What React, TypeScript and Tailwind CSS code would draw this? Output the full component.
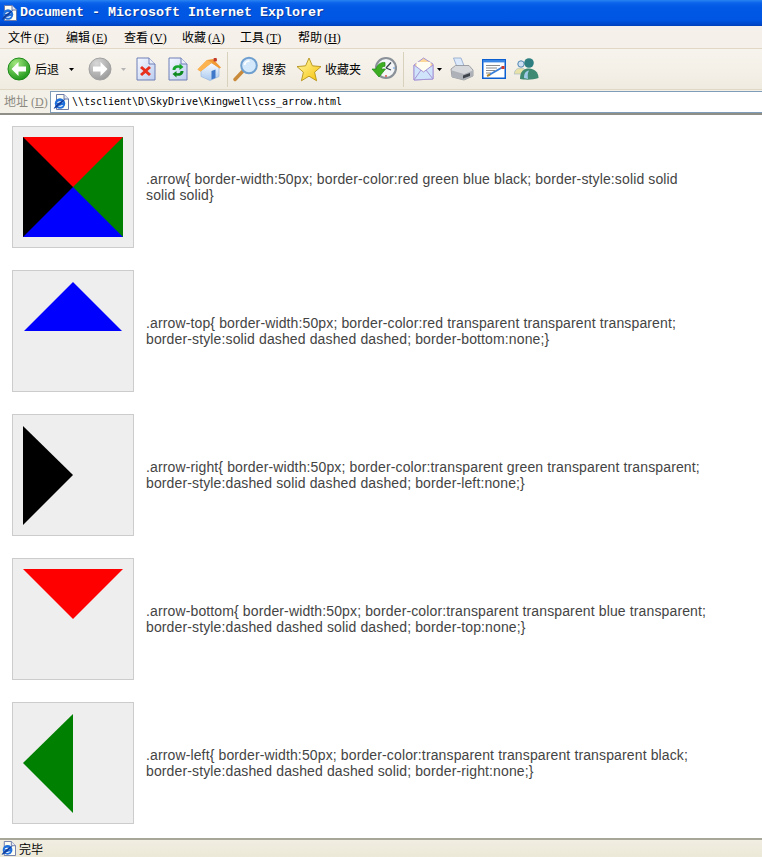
import React from "react";

const cjk = "font-['Noto_Sans_CJK_SC',sans-serif]";

const menus = [
  ["文件", "F"],
  ["编辑", "E"],
  ["查看", "V"],
  ["收藏", "A"],
  ["工具", "T"],
  ["帮助", "H"],
];

// small IE page icon, used in title bar, address bar and status bar
const IePage = ({ size = 16 }: { size?: number }) => (
  <svg width={size} height={size} viewBox="0 0 16 16">
    <path d="M3.5 .5H11L15.5 5V15.5H3.5Z" fill="#fdfdf4" stroke="#6b7aa8" />
    <path d="M11 .5V5H15.5" fill="#e4e8f2" stroke="#6b7aa8" />
    <circle cx="7" cy="9.5" r="5.2" fill="#1f6fdc" />
    <path d="M3.8 8.8H9.8C9.4 6.8 4.8 6.6 3.8 8.8ZM3.6 10.2C4 13 8 13.6 10.4 11.2H8.2C6.6 12.2 5.2 11.6 5.2 10.2Z" fill="#fff" />
    <path d="M.6 14.6C2.6 15 8.4 10 12.4 5C9.4 5.8 2.4 10.8 .6 14.6Z" fill="#123f9e" />
  </svg>
);

const RoundArrow = ({ id, dir, light, dark, ring }: { id: string; dir: "left" | "right"; light: string; dark: string; ring: string }) => (
  <svg width="24" height="24" viewBox="0 0 24 24">
    <defs>
      <radialGradient id={id} cx="35%" cy="25%" r="85%">
        <stop offset="0" stopColor={light} />
        <stop offset="1" stopColor={dark} />
      </radialGradient>
    </defs>
    <circle cx="12" cy="12" r="11" fill={`url(#${id})`} stroke={ring} />
    <path
      d={dir === "left" ? "M4.5 12L11.5 5V9.5H19V14.5H11.5V19Z" : "M19.5 12L12.5 5V9.5H5V14.5H12.5V19Z"}
      fill="#fff"
    />
  </svg>
);

const DocIcon = ({ children }: { children: React.ReactNode }) => (
  <svg width="20" height="24" viewBox="0 0 20 24">
    <defs>
      <linearGradient id="docFill" x1="0" y1="0" x2="1" y2="1">
        <stop offset="0" stopColor="#f6f9ff" />
        <stop offset="1" stopColor="#bccdf0" />
      </linearGradient>
    </defs>
    <path d="M1 1H13L19 7V23H1Z" fill="url(#docFill)" stroke="#6f7fb5" />
    <path d="M13 1V7H19" fill="#e7ecf8" stroke="#6f7fb5" />
    {children}
  </svg>
);

const HomeIcon = () => (
  <svg width="25" height="24" viewBox="0 0 25 24">
    <defs>
      <linearGradient id="wall" x1="0" y1="0" x2="0" y2="1">
        <stop offset="0" stopColor="#ffffff" />
        <stop offset="1" stopColor="#a9c9f0" />
      </linearGradient>
    </defs>
    <path d="M4 11V19.5L13 23.5L22 19.5V10L13 5Z" fill="url(#wall)" stroke="#8fb0dc" strokeWidth=".6" />
    <path d="M14.5 14L18.5 12.6V21L14.5 22.6Z" fill="#3f78c8" />
    <path d="M.5 12.5L10 3L16 2L24 10.5L22.5 11.5L14.5 6L3.5 14.5Z" fill="#f29a34" />
    <path d="M.5 12.5L10 3L15 5.5L3.5 14.5Z" fill="#fbb451" />
    <rect x="16.5" y="1" width="3.4" height="3.4" rx="1" fill="#c23a28" />
  </svg>
);

const SearchIcon = () => (
  <svg width="26" height="26" viewBox="0 0 26 26">
    <path d="M2 23.5L9.5 15.5" stroke="#c98a3a" strokeWidth="3.4" strokeLinecap="round" />
    <circle cx="16" cy="9.5" r="7.8" fill="#d4e8fb" stroke="#6f9fce" strokeWidth="2" />
    <path d="M11.5 9C12 6.5 14 5 16.5 5" stroke="#fff" strokeWidth="1.6" fill="none" />
  </svg>
);

const StarIcon = () => (
  <svg width="26" height="25" viewBox="0 0 26 25">
    <defs>
      <linearGradient id="star" x1="0" y1="0" x2="1" y2="1">
        <stop offset="0" stopColor="#fffbb0" />
        <stop offset="1" stopColor="#f7c000" />
      </linearGradient>
    </defs>
    <path d="M13 1L16.4 8.8L25 9.6L18.6 15.2L20.6 23.8L13 19.2L5.4 23.8L7.4 15.2L1 9.6L9.6 8.8Z" fill="url(#star)" stroke="#b4931a" strokeWidth=".9" />
  </svg>
);

const HistoryIcon = () => (
  <svg width="26" height="26" viewBox="0 0 26 26">
    <circle cx="15" cy="12" r="10" fill="#f3f5f7" stroke="#8a9198" strokeWidth="2.2" />
    <path d="M15 12L20 6.5M15 12L20 14" stroke="#39424c" strokeWidth="1.3" />
    <circle cx="15" cy="20" r="1" fill="#dd5148" />
    <circle cx="23" cy="12" r=".8" fill="#4a90d9" />
    <path d="M14 6.5C10 6 6 8.5 5.2 13H1L8 21L14.5 13H10.2C10.8 11 12.4 10.2 14 10.3Z" fill="#3dae22" stroke="#1f8a14" strokeWidth=".7" />
  </svg>
);

const MailIcon = () => (
  <svg width="21" height="24" viewBox="0 0 21 24">
    <path d="M1 8L10.5 1L20 7V22L1 23Z" fill="#fbd79a" stroke="#a795d6" />
    <path d="M3.5 11V5L17.5 5V11L10.5 15Z" fill="#fffdf2" />
    <path d="M1 8L10.5 15L20 8V22L1 23Z" fill="#cfe3fb" stroke="#a795d6" />
    <path d="M1 23L8 13M20 22L13 13" stroke="#a795d6" />
  </svg>
);

const PrinterIcon = () => (
  <svg width="24" height="24" viewBox="0 0 24 24">
    <path d="M3.5 1H11L14.5 10H7Z" fill="#dce9fb" stroke="#8ea3c9" strokeWidth=".8" />
    <path d="M1 12L5.5 8.5H19L23 13V19L14 23L2 20Z" fill="#d6d8dc" stroke="#8b8f96" strokeWidth=".8" />
    <path d="M2 13.5L14 17L23 13.5V19L14 23L2 20Z" fill="#aeb2b8" />
    <path d="M13 18.5L20 16V19L13 21.5Z" fill="#3f444c" />
  </svg>
);

const EditIcon = () => (
  <svg width="24" height="20" viewBox="0 0 24 20">
    <rect x=".75" y=".75" width="22.5" height="18.5" fill="#fff" stroke="#0b5fd0" strokeWidth="1.5" />
    <rect x="1" y="1" width="22" height="2.4" fill="#3a86e4" />
    <path d="M4 6.5H18M4 9H15M4 11.5H13M4 14H9" stroke="#8b8b8b" />
    <path d="M7 16L20 8.5" stroke="#3a7fd8" strokeWidth="2" />
    <path d="M5 17L8 15.5" stroke="#b58a2f" strokeWidth="2" />
    <rect x="19.5" y="7" width="3" height="3" fill="#d23a2a" />
  </svg>
);

const MessengerIcon = () => (
  <svg width="25" height="22" viewBox="0 0 25 22">
    <circle cx="7" cy="6" r="3.2" fill="#cfe0f3" stroke="#4f86b0" />
    <path d="M0 16C1 11 4 10 7 10C10 10 12 12 12 16Z" fill="#e9e2a8" stroke="#9bb3c6" strokeWidth=".6" />
    <circle cx="15" cy="5" r="4.8" fill="#2f7f80" />
    <path d="M6 21C6 13 10 10.5 15 10.5C20 10.5 24.5 14 24.5 20C19 22 11 22 6 21Z" fill="#3f8a72" />
    <path d="M10 20C10 15 12 13 15 12.5C13.5 15 13.5 18 14 21Z" fill="#9fcbe8" />
  </svg>
);

const Caret = ({ color = "#000" }: { color?: string }) => (
  <svg width="5" height="3" viewBox="0 0 5 3">
    <path d="M0 0H5L2.5 3Z" fill={color} />
  </svg>
);

const Divider = () => <div className="h-[35px] w-px bg-[#d8d2bd]" />;

const rows = [
  {
    text: ".arrow{ border-width:50px; border-color:red green blue black; border-style:solid solid solid solid}",
    shape: (
      <div className="h-[100px] w-[100px] border-[50px] border-t-[#ff0000] border-r-[#008000] border-b-[#0000ff] border-l-[#000000]" />
    ),
  },
  {
    text: ".arrow-top{ border-width:50px; border-color:red transparent transparent transparent; border-style:solid dashed dashed dashed; border-bottom:none;}",
    shape: (
      <div className="mt-px ml-px h-0 w-0 border-x-[49px] border-b-[49px] border-x-transparent border-b-[#0000ff]" />
    ),
  },
  {
    text: ".arrow-right{ border-width:50px; border-color:transparent green transparent transparent; border-style:dashed solid dashed dashed; border-left:none;}",
    shape: (
      <div className="mt-px h-0 w-0 border-t-[49px] border-b-[50px] border-l-[50px] border-y-transparent border-l-[#000000]" />
    ),
  },
  {
    text: ".arrow-bottom{ border-width:50px; border-color:transparent transparent blue transparent; border-style:dashed dashed solid dashed; border-top:none;}",
    shape: (
      <div className="h-0 w-0 border-x-[50px] border-t-[50px] border-x-transparent border-t-[#ff0000]" />
    ),
  },
  {
    text: ".arrow-left{ border-width:50px; border-color:transparent transparent transparent black; border-style:dashed dashed dashed solid; border-right:none;}",
    shape: (
      <div className="mt-px h-0 w-0 border-t-[49px] border-b-[50px] border-r-[50px] border-y-transparent border-r-[#008000]" />
    ),
  },
];

export default function App() {
  return (
    <div className="flex h-[857px] w-[762px] flex-col overflow-hidden bg-white">
      {/* Title bar */}
      <div className="flex h-[26px] items-center gap-[3px] bg-[linear-gradient(#2a84f2_0px,#0a62ea_3px,#0058e4_8px,#0056e2_20px,#0048cc_24px,#003fb8_26px)] pl-[1px]">
        <IePage size={16} />
        <span className="font-['Liberation_Mono',monospace] text-[13.33px] font-bold leading-none text-white [text-shadow:1px_1px_0_#0a3a9c]">
          Document - Microsoft Internet Explorer
        </span>
      </div>

      {/* Menu bar */}
      <div className={`flex h-[22px] items-center gap-[16px] bg-[#f5f1ea] pl-[8px] text-[12px] text-black ${cjk}`}>
        {menus.map(([label, key]) => (
          <span key={key} className="w-[42px] whitespace-nowrap">
            {label}
            <span className="ml-[2px] font-['Liberation_Serif',serif] text-[12px]">
              (<span className="underline">{key}</span>)
            </span>
          </span>
        ))}
      </div>

      {/* Toolbar */}
      <div className={`flex h-[41px] items-center border-t border-[#e0d8c4] bg-[linear-gradient(#f7f4ed,#f4f0e8_55%,#efebdf)] pl-[7px] text-[12px] text-black ${cjk}`}>
        <RoundArrow id="back" dir="left" light="#a4e880" dark="#128f10" ring="#1f8a1c" />
        <span className="ml-[4px]">后退</span>
        <span className="ml-[10px] flex"><Caret /></span>
        <span className="ml-[14px] flex"><RoundArrow id="fwd" dir="right" light="#d8d8d8" dark="#969696" ring="#a2a2a2" /></span>
        <span className="ml-[9px] flex"><Caret color="#b5b5b5" /></span>
        <span className="ml-[10px] flex">
          <DocIcon>
            <path d="M6 9L9.5 12L13 9L15 11L11.5 14L15 17L13 19L9.5 16L6 19L4 17L7.5 14L4 11Z" fill="#e8301f" />
          </DocIcon>
        </span>
        <span className="ml-[12px] flex">
          <DocIcon>
            <path d="M4.5 13C4.5 9.5 7.5 7.5 11.5 8.5V6.5L15.5 10L11.5 13V11C9 10.2 7.5 11.2 7.5 13Z" fill="#16a52a" />
            <path d="M15.5 14C15.5 17.5 12.5 19.5 8.5 18.5V20.5L4.5 17L8.5 14V16C11 16.8 12.5 15.8 12.5 14Z" fill="#0e8a20" />
          </DocIcon>
        </span>
        <span className="ml-[9px] flex"><HomeIcon /></span>
        <span className="ml-[5px] flex"><Divider /></span>
        <span className="ml-[5px] flex"><SearchIcon /></span>
        <span className="ml-[3px]">搜索</span>
        <span className="ml-[10px] flex"><StarIcon /></span>
        <span className="ml-[3px]">收藏夹</span>
        <span className="ml-[10px] flex"><HistoryIcon /></span>
        <span className="ml-[6px] flex"><Divider /></span>
        <span className="ml-[9px] flex"><MailIcon /></span>
        <span className="ml-[3px] flex"><Caret /></span>
        <span className="ml-[8px] flex"><PrinterIcon /></span>
        <span className="ml-[8px] flex"><EditIcon /></span>
        <span className="ml-[8px] flex"><MessengerIcon /></span>
      </div>

      {/* Address bar */}
      <div className="flex h-[24px] items-center border-t border-[#e0d8c4] bg-[#f3f0e8] pl-[4px]">
        <span className={`w-[46px] text-[12px] text-[#8c8a80] ${cjk}`}>
          地址
          <span className="ml-[3px] font-['Liberation_Serif',serif] text-[12px]">
            (<span className="underline">D</span>)
          </span>
        </span>
        <div className="flex h-[22px] flex-1 items-center gap-[3px] border border-r-0 border-[#7f9db9] bg-white pl-[2px]">
          <IePage size={16} />
          <span className="font-['DejaVu_Sans_Mono',monospace] text-[10px] tracking-[-0.02px] text-black">
            \\tsclient\D\SkyDrive\Kingwell\css_arrow.html
          </span>
        </div>
      </div>

      {/* Page */}
      <main className="flex-1 border-t-2 border-[#8f8f88] pt-[11px] pl-[12px] font-['Liberation_Sans',Arial,sans-serif]">
        <div className="flex flex-col gap-[22px]">
          {rows.map((row, i) => (
            <div key={i} className="flex items-center gap-[12px]">
              <div className="h-[122px] w-[122px] border border-[#cccccc] bg-[#eeeeee] p-[10px]">
                {row.shape}
              </div>
              <p className="w-[562px] text-[14px] leading-[16px] tracking-[0.13px] text-[#444444]">{row.text}</p>
            </div>
          ))}
        </div>
      </main>

      {/* Status bar */}
      <div className={`flex h-[19px] items-center gap-[3px] border-t-2 border-[#a8a698] bg-[linear-gradient(#f1eee2,#ece9d8)] pl-px text-[12px] text-black ${cjk}`}>
        <IePage size={15} />
        <span>完毕</span>
      </div>
    </div>
  );
}
